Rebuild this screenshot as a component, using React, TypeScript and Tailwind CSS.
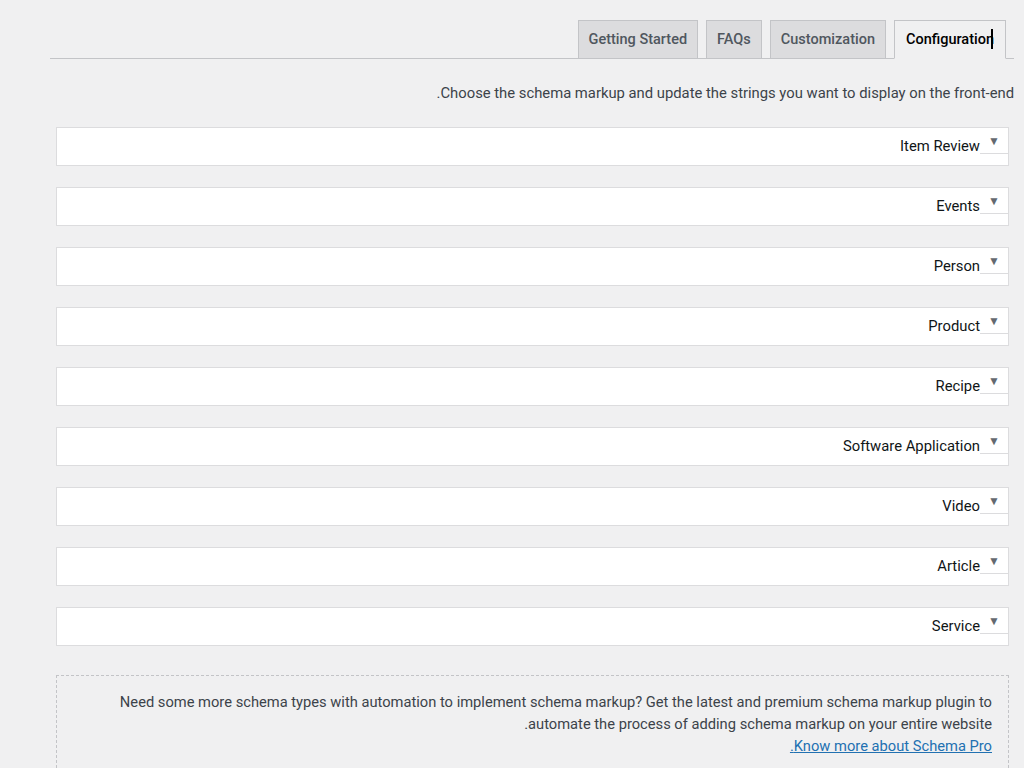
const sections = [
  "Item Review",
  "Events",
  "Person",
  "Product",
  "Recipe",
  "Software Application",
  "Video",
  "Article",
  "Service",
];

const tabs = ["Getting Started", "FAQs", "Customization"];

const App = () => {
  return (
    <div
      className="min-h-[768px] w-[1024px] bg-[#f0f0f1] overflow-hidden"
      style={{ fontFamily: "Roboto, 'Liberation Sans', sans-serif" }}
    >
      <div className="ml-[50px] mr-[10px] pt-[20px]">
        <div dir="rtl" className="flex items-end gap-[8px] border-b border-[#c3c4c7] pr-[8px]">
          <div className="relative -mb-px h-[39px] px-[11px] flex items-center bg-[#f0f0f1] border border-[#c3c4c7] border-b-[#f0f0f1] text-[14.5px] font-medium text-[#000]">
            <span dir="ltr" className="relative">
              Configuration
              <span className="absolute right-[1px] top-[0px] h-[20px] w-[2px] bg-black" />
            </span>
          </div>
          {[...tabs].reverse().map((t) => (
            <div
              key={t}
              className="h-[38px] px-[10px] flex items-center bg-[#dcdcde] border border-[#c3c4c7] border-b-0 text-[14.5px] font-medium text-[#50575e]"
            >
              {t}
            </div>
          ))}
        </div>
      </div>

      <div dir="rtl" className="pr-[10px] pl-[56px]">
        <p className="mt-[24px] text-[14.8px] text-[#3c434a] leading-[20px]">
          Choose the schema markup and update the strings you want to display on the front-end.
        </p>

        <div className="mt-[24px] mr-[5px] flex flex-col gap-[21px]">
          {sections.map((s) => (
            <div
              key={s}
              className="h-[39px] bg-white border border-[#dcdcde] flex items-center"
            >
              <div className="w-[28px] h-[26px] flex items-start justify-center border-b border-[#dcdcde] self-start">
                <span className="text-[12px] text-[#646970] leading-none mt-[7px]">▼</span>
              </div>
              <span className="text-[14.8px] text-[#101517]">{s}</span>
            </div>
          ))}
        </div>

        <div className="mt-[29px] mr-[5px] border border-dashed border-[#c3c4c7] pt-[15px] pr-[16px] pb-[20px] pl-[16px] text-[14.7px] leading-[22px] text-[#3c434a]">
          <p>
            Need some more schema types with automation to implement schema markup? Get the latest and premium schema markup plugin to automate the process of adding schema markup on your entire website.
          </p>
          <a href="#" className="text-[#2271b1] underline">
            Know more about Schema Pro.
          </a>
        </div>
      </div>
    </div>
  );
};

export default App;
